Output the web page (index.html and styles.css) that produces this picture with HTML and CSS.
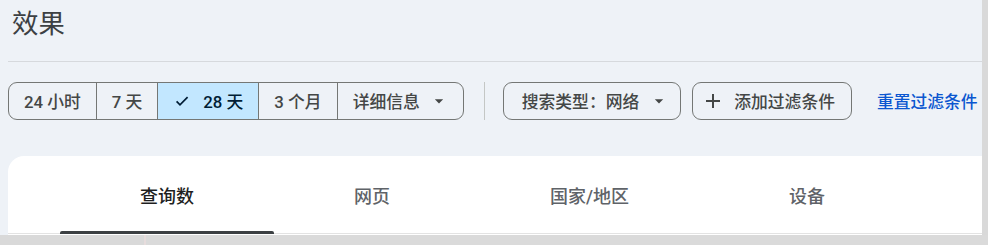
FILE: index.html
```html
<!DOCTYPE html>
<html lang="zh-CN">
<head>
<meta charset="utf-8">
<title>效果</title>
<link rel="stylesheet" href="styles.css">
</head>
<body>
<div class="page">
  <header class="head">
    <h1 class="title">效果</h1>
  </header>

  <div class="filters">
    <div class="seg">
      <button class="seg-btn">24 小时</button>
      <button class="seg-btn">7 天</button>
      <button class="seg-btn is-selected">
        <svg class="check" viewBox="0 0 18 18" aria-hidden="true"><path d="M3.6 9.4 L7 12.8 L14.6 5.2"/></svg>
        <span>28 天</span>
      </button>
      <button class="seg-btn">3 个月</button>
      <button class="seg-btn has-menu">
        <span>详细信息</span>
        <svg class="caret" viewBox="0 0 24 24" aria-hidden="true"><path d="M7 10l5 5 5-5z"/></svg>
      </button>
    </div>

    <span class="vdiv"></span>

    <button class="chip has-menu">
      <span>搜索类型：网络</span>
      <svg class="caret" viewBox="0 0 24 24" aria-hidden="true"><path d="M7 10l5 5 5-5z"/></svg>
    </button>

    <button class="chip add">
      <svg class="plus" viewBox="0 0 24 24" aria-hidden="true"><path d="M19 13h-6v6h-2v-6H5v-2h6V5h2v6h6v2z"/></svg>
      <span>添加过滤条件</span>
    </button>

    <a class="reset" href="#">重置过滤条件</a>
  </div>

  <section class="card">
    <div class="tabbar">
      <div class="tabs">
        <div class="tab is-active">查询数<span class="indicator"></span></div>
        <div class="tab">网页</div>
        <div class="tab">国家/地区</div>
        <div class="tab">设备</div>
      </div>
    </div>
  </section>
</div>
<div class="bottom">
  <span class="bottom-left"></span>
  <span class="bottom-line"></span>
  <span class="bottom-rest"></span>
</div>
</body>
</html>
```

FILE: styles.css
```css
html, body {
  margin: 0;
  padding: 0;
}

body {
  background: #d9d9d9;
  font-family: Roboto, "Noto Sans CJK SC", sans-serif;
  width: 988px;
  height: 245px;
  overflow: hidden;
}

.page {
  width: 982px;
  height: 235px;
  box-sizing: border-box;
  padding-left: 8px;
  background: #eef2f7;
  overflow: hidden;
}

.head {
  height: 61px;
  border-bottom: 1px solid #d6d9dd;
}

.title {
  margin: 0;
  padding: 8px 0 0 4px;
  font-size: 26.4px;
  line-height: 32px;
  font-weight: 400;
  color: #3c4043;
}

.filters {
  display: flex;
  align-items: center;
  height: 38px;
  margin-top: 20px;
}

.seg {
  display: flex;
  height: 38px;
  box-sizing: border-box;
  border: 1px solid #747775;
  border-radius: 9px;
  overflow: hidden;
}

.seg-btn {
  display: flex;
  align-items: center;
  border: 0;
  border-left: 1px solid #747775;
  background: transparent;
  margin: 0;
  padding: 0 15px;
  font-family: inherit;
  font-size: 16.8px;
  font-weight: 500;
  color: #444746;
  cursor: pointer;
}

.seg-btn:first-child {
  border-left: 0;
}

.seg-btn.is-selected {
  background: #c2e7ff;
  color: #001d35;
  gap: 12px;
}

.seg-btn.has-menu {
  gap: 9px;
  padding-right: 14px;
}

.check {
  width: 18px;
  height: 18px;
  fill: none;
  stroke: #001d35;
  stroke-width: 1.7;
}

.caret {
  width: 20px;
  height: 20px;
  fill: #444746;
}

.vdiv {
  width: 1px;
  height: 38px;
  background: #c4c7c5;
  margin: 0 18px 0 20px;
}

.chip {
  display: flex;
  align-items: center;
  height: 38px;
  box-sizing: border-box;
  margin: 0;
  border: 1px solid #747775;
  border-radius: 9px;
  background: transparent;
  font-family: inherit;
  font-size: 16.8px;
  font-weight: 500;
  color: #444746;
  cursor: pointer;
}

.chip.has-menu {
  padding: 0 11px 0 18px;
  gap: 10px;
}

.chip.add {
  margin-left: 11px;
  padding: 0 16px 0 8px;
  gap: 9px;
}

.plus {
  width: 24px;
  height: 24px;
  fill: #444746;
}

.reset {
  margin-left: 25px;
  font-size: 16.8px;
  font-weight: 500;
  color: #0b57d0;
  text-decoration: none;
  white-space: nowrap;
}

.card {
  margin-top: 36px;
  width: 1000px;
  height: 120px;
  background: #ffffff;
  border-radius: 16px 16px 0 0;
}

.tabbar {
  height: 77px;
  border-bottom: 1px solid #e3e3e3;
}

.tabs {
  display: flex;
  width: 845px;
  height: 77px;
  margin-left: 52px;
}

.tab {
  flex: 1 1 auto;
  position: relative;
  display: flex;
  align-items: center;
  justify-content: center;
  font-size: 18px;
  font-weight: 500;
  color: #5f6368;
  white-space: nowrap;
}

.tab.is-active {
  color: #1f1f1f;
}

.indicator {
  position: absolute;
  left: 0;
  right: 0;
  bottom: -1px;
  height: 3px;
  background: #3c4043;
  border-radius: 2px 2px 0 0;
}

.bottom {
  display: flex;
  height: 10px;
}

.bottom-left {
  width: 144px;
  background: #d9d9d9;
}

.bottom-line {
  width: 2px;
  background: #e6dcdc;
}

.bottom-rest {
  flex: 1;
  background: #dadada;
}
```
